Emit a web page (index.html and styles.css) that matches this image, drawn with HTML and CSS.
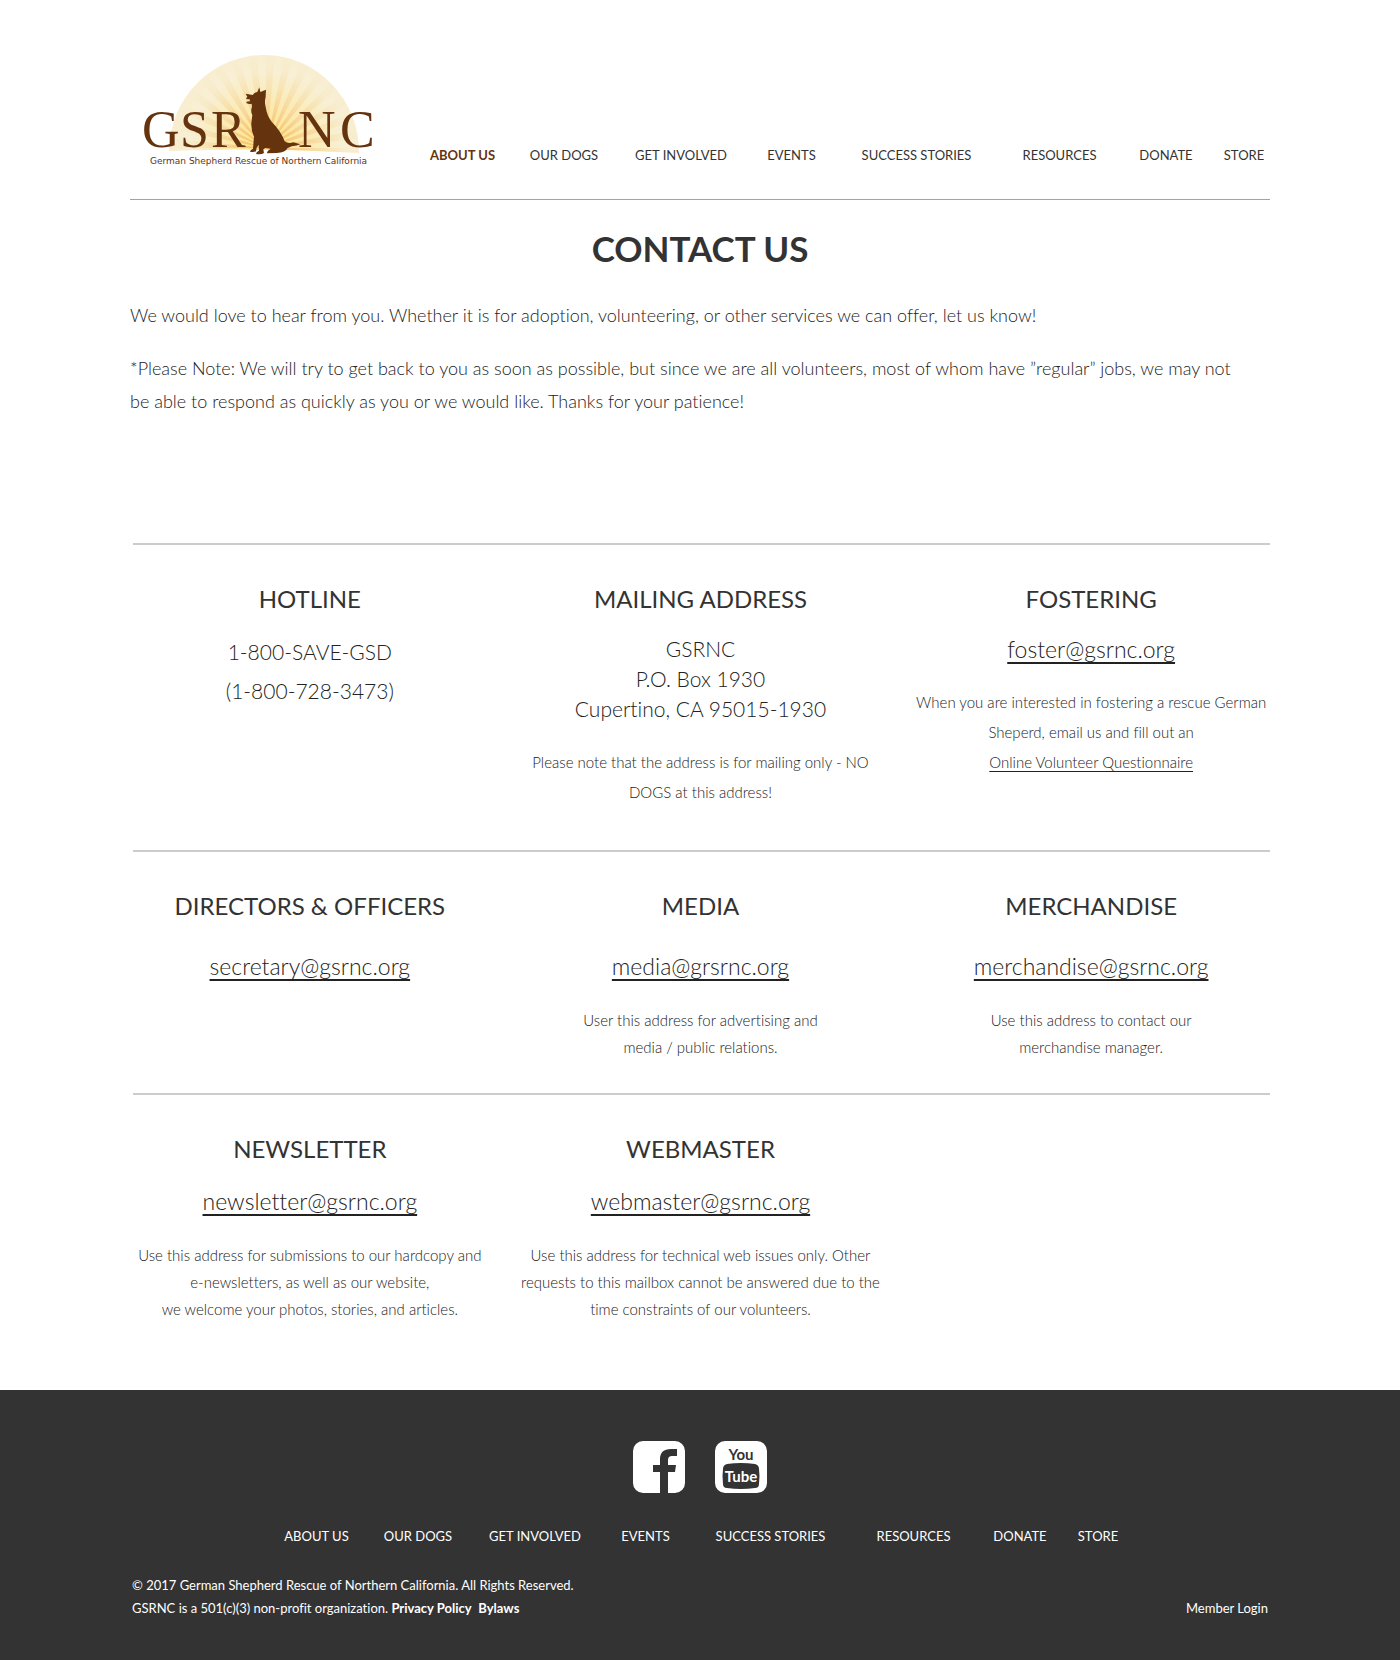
FILE: index.html
```html
<!DOCTYPE html>
<html lang="en">
<head>
<meta charset="utf-8">
<meta name="viewport" content="width=device-width, initial-scale=1">
<title>Contact Us - GSRNC</title>
<link rel="stylesheet" href="styles.css">
</head>
<body>
<header class="header wrap">
  <a class="logo" href="#">
    <svg width="250" height="120" viewBox="10 10 250 120" role="img" aria-label="GSRNC">
      <defs>
        <radialGradient id="sky" gradientUnits="userSpaceOnUse" cx="146" cy="108" r="96">
          <stop offset="0" stop-color="#fde27a"/>
          <stop offset=".4" stop-color="#fbeaac"/>
          <stop offset=".8" stop-color="#f8f0d6"/>
          <stop offset="1" stop-color="#f8edcf"/>
        </radialGradient>
        <radialGradient id="ray" gradientUnits="userSpaceOnUse" cx="146" cy="108" r="90">
          <stop offset="0" stop-color="#f6b552"/>
          <stop offset=".45" stop-color="#f8d698"/>
          <stop offset="1" stop-color="#f6eac6" stop-opacity=".2"/>
        </radialGradient>
        <clipPath id="dome"><path d="M49 111A95 97 0 0 1 239 113Q140 107 49 111Z"/></clipPath>
      </defs>
      <g clip-path="url(#dome)">
        <rect x="40" y="10" width="210" height="110" fill="url(#sky)"/>
        <circle cx="146" cy="108" r="46" fill="none" stroke="url(#ray)" stroke-width="92" pathLength="64" stroke-dasharray="1 1"/>
      </g>
      <g class="logo-letters">
        <text x="22" y="107">G</text><text x="60" y="107">S</text><text x="91" y="107">R</text>
        <text x="178" y="107">N</text><text x="220" y="107">C</text>
      </g>
      <path class="logo-dog" transform="scale(.3333)" d="M377 161L398 165Q403 157 412 156L418 142L421 156L438 149L437 172Q433 185 437 200Q440 225 455 245Q484 275 494 304Q505 313 520 307L541 313Q532 318 515 319L502 325Q498 337 470 339L441 340Q440 333 452 326L436 324L430 328L432 339Q425 344 408 342Q409 335 417 332L416 314L410 323L408 334Q400 338 390 335Q390 330 399 326L402 290Q393 270 394 250L397 225Q391 215 396 200L395 191Q388 193 380 190L379 185L390 184L389 178L378 177L382 170Z"/>
      <text class="logo-tag" x="30" y="124">German Shepherd Rescue of Northern California</text>
    </svg>
  </a>
  <nav class="nav" aria-label="Main">
    <a class="current" href="#">ABOUT US</a>
    <a href="#">OUR DOGS</a>
    <a href="#">GET INVOLVED</a>
    <a href="#">EVENTS</a>
    <a href="#">SUCCESS STORIES</a>
    <a href="#">RESOURCES</a>
    <a href="#">DONATE</a>
    <a href="#">STORE</a>
  </nav>
</header>

<main class="wrap">
  <h1>CONTACT US</h1>
  <div class="intro">
    <p>We would love to hear from you. Whether it is for adoption, volunteering, or other services we can offer, let us know!</p>
    <p>*Please Note: We will try to get back to you as soon as possible, but since we are all volunteers, most of whom have ”regular” jobs, we may not<br>be able to respond as quickly as you or we would like. Thanks for your patience!</p>
  </div>

  <hr>
  <div class="row row-general">
    <section>
      <h2>HOTLINE</h2>
      <p class="phone">1-800-SAVE-GSD<br>(1-800-728-3473)</p>
    </section>
    <section>
      <h2>MAILING ADDRESS</h2>
      <p class="address">GSRNC<br>P.O. Box 1930<br>Cupertino, CA 95015-1930</p>
      <p class="note">Please note that the address is for mailing only - NO<br>DOGS at this address!</p>
    </section>
    <section>
      <h2>FOSTERING</h2>
      <p class="email"><a href="mailto:foster@gsrnc.org">foster@gsrnc.org</a></p>
      <p class="note">When you are interested in fostering a rescue German<br>Sheperd, email us and fill out an<br><a href="#">Online Volunteer Questionnaire</a></p>
    </section>
  </div>

  <hr>
  <div class="row row-departments">
    <section>
      <h2>DIRECTORS &amp; OFFICERS</h2>
      <p class="email"><a href="mailto:secretary@gsrnc.org">secretary@gsrnc.org</a></p>
    </section>
    <section>
      <h2>MEDIA</h2>
      <p class="email"><a href="mailto:media@grsrnc.org">media@grsrnc.org</a></p>
      <p class="note">User this address for advertising and<br>media / public relations.</p>
    </section>
    <section>
      <h2>MERCHANDISE</h2>
      <p class="email"><a href="mailto:merchandise@gsrnc.org">merchandise@gsrnc.org</a></p>
      <p class="note">Use this address to contact our<br>merchandise manager.</p>
    </section>
  </div>

  <hr>
  <div class="row row-web">
    <section>
      <h2>NEWSLETTER</h2>
      <p class="email"><a href="mailto:newsletter@gsrnc.org">newsletter@gsrnc.org</a></p>
      <p class="note">Use this address for submissions to our hardcopy and<br>e-newsletters, as well as our website,<br>we welcome your photos, stories, and articles.</p>
    </section>
    <section>
      <h2>WEBMASTER</h2>
      <p class="email"><a href="mailto:webmaster@gsrnc.org">webmaster@gsrnc.org</a></p>
      <p class="note">Use this address for technical web issues only. Other<br>requests to this mailbox cannot be answered due to the<br>time constraints of our volunteers.</p>
    </section>
  </div>
</main>

<footer class="footer">
  <div class="wrap">
    <div class="social">
      <a href="#" aria-label="Facebook">
        <svg width="52" height="52" viewBox="0 0 52 52"><rect width="52" height="52" rx="10" fill="#fff"/><path fill="#333" d="M27 52V31H20V24H27V18Q27 8 38 8H44V15H39Q35 15 35 19V24H43L42 31H35V52Z"/></svg>
      </a>
      <a href="#" aria-label="YouTube">
        <svg class="youtube" width="52" height="52" viewBox="0 0 52 52"><rect width="52" height="52" rx="10" fill="#fff"/><path fill="#333" d="M12 23Q26 21 40 23Q44 24 44 28Q45 35 44 43Q44 47 40 47Q26 49 12 47Q8 47 8 43Q7 35 8 28Q8 24 12 23Z"/><text x="26" y="19" fill="#333">You</text><text x="26" y="41" fill="#fff">Tube</text></svg>
      </a>
    </div>
    <nav class="nav" aria-label="Footer">
      <a href="#">ABOUT US</a>
      <a href="#">OUR DOGS</a>
      <a href="#">GET INVOLVED</a>
      <a href="#">EVENTS</a>
      <a href="#">SUCCESS STORIES</a>
      <a href="#">RESOURCES</a>
      <a href="#">DONATE</a>
      <a href="#">STORE</a>
    </nav>
    <div class="legal">
      <p>© 2017 German Shepherd Rescue of Northern California. All Rights Reserved.<br>GSRNC is a 501(c)(3) non-profit organization. <a href="#">Privacy Policy</a>&nbsp; <a href="#">Bylaws</a></p>
      <a class="login" href="#">Member Login</a>
    </div>
  </div>
</footer>
</body>
</html>
```
FILE: styles.css
```css
* {
  box-sizing: border-box;
}

body {
  margin: 0;
  background: #fff;
  color: #333;
  font-family: Lato, "Open Sans", sans-serif;
  font-weight: 300;
  font-variant-ligatures: none;
}

h1, h2, p {
  margin: 0;
}

a {
  color: inherit;
}

svg {
  display: block;
}

.wrap {
  width: 100%;
  max-width: 1140px;
  margin: 0 auto;
}

.header {
  display: flex;
  justify-content: space-between;
  align-items: flex-end;
  padding: 50px 0 29px;
  border-bottom: 1px solid #a3a3a3;
}

.logo-letters {
  fill: #66330f;
  font-family: "Liberation Serif", serif;
  font-size: 52px;
  font-weight: 400;
}

.logo-dog {
  fill: #66330f;
}

.logo-tag {
  fill: #66330f;
  font-family: "DejaVu Sans", sans-serif;
  font-size: 9px;
  font-weight: 400;
}

.nav {
  display: grid;
  grid-template-columns: 117fr 86fr 148fr 73fr 177fr 109fr 104fr 52fr;
  width: 100%;
  max-width: 866px;
  font-size: 13px;
  font-weight: 400;
  line-height: 20px;
  text-align: center;
  white-space: nowrap;
}

.nav a {
  text-decoration: none;
}

.header .nav {
  padding-bottom: 5px;
}

.nav .current {
  color: #66330f;
  font-weight: 700;
}

h1 {
  margin-top: 26px;
  font-size: 35px;
  font-weight: 700;
  line-height: 44px;
  text-align: center;
}

.intro {
  display: grid;
  gap: 20px;
  margin: 29px 0 125px;
  color: #222;
  font-size: 18px;
  line-height: 33px;
}

hr {
  height: 2px;
  margin: 0 0 0 3px;
  border: 0;
  background: #ccc;
}

.row {
  display: grid;
  grid-template-columns: repeat(3, 1fr);
  column-gap: 33px;
  padding: 38px 0 0 1px;
  text-align: center;
}

.row-general {
  padding-bottom: 43px;
}

.row-departments {
  padding-bottom: 32px;
}

.row-web {
  padding-bottom: 67px;
}

h2 {
  margin-bottom: 19px;
  font-size: 24px;
  font-weight: 400;
  line-height: 32px;
}

.row-departments h2 {
  margin-bottom: 29px;
}

.row-web h2 {
  margin-bottom: 21px;
}

.phone,
.address {
  color: #222;
  font-size: 21px;
  line-height: 30px;
}

.phone {
  margin-top: -2px;
  line-height: 39px;
}

.email {
  color: #222;
  font-size: 23px;
  line-height: 30px;
}

.email a {
  text-decoration-thickness: 2px;
  text-underline-offset: 4px;
}

.note {
  margin: 26px -8px 0;
  color: #222;
  font-size: 15px;
  line-height: 27px;
}

.note a {
  text-decoration-thickness: 1px;
  text-underline-offset: 3px;
}

.row-general .note {
  margin-top: 23px;
  line-height: 30px;
}

.footer {
  padding: 51px 0 40px;
  background: #333;
  color: #fff;
}

.social {
  display: flex;
  justify-content: center;
  gap: 30px;
}

.youtube text {
  font-family: Lato, sans-serif;
  font-size: 15px;
  font-weight: 700;
  text-anchor: middle;
}

.footer .nav {
  max-width: 884px;
  margin: 33px auto 28px;
  padding-right: 18px;
}

.legal {
  display: flex;
  justify-content: space-between;
  align-items: flex-end;
  padding: 0 2px;
  font-size: 13px;
  font-weight: 400;
  line-height: 23px;
}

.legal a {
  font-weight: 700;
  text-decoration: none;
}

.legal .login {
  font-weight: 400;
}
```
